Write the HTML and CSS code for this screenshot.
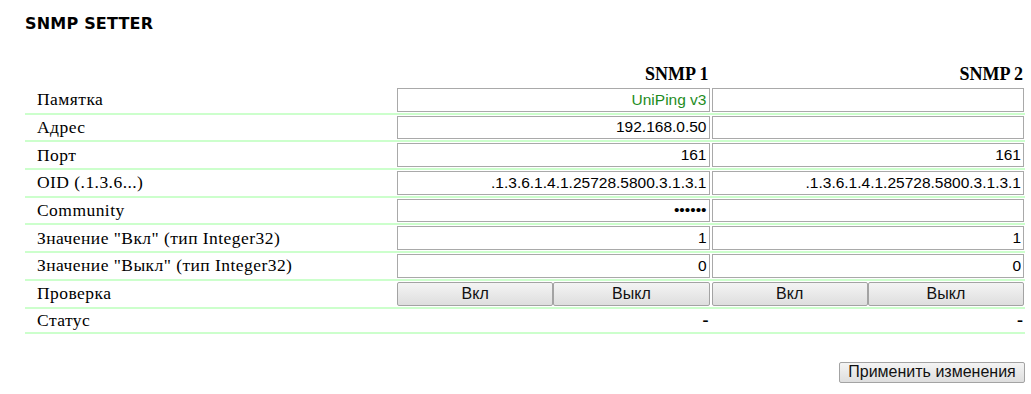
FILE: index.html
```html
<!DOCTYPE html>
<html lang="ru">
<head>
<meta charset="utf-8">
<title>SNMP SETTER</title>
<link rel="stylesheet" href="styles.css">
</head>
<body>
<div class="page">
  <h1 class="title">SNMP SETTER</h1>
  <div class="grid">
    <div class="hd"></div>
    <div class="hd">SNMP 1</div>
    <div class="hd">SNMP 2</div>

    <div class="lbl">Памятка</div>
    <div class="cell"><input class="fld green" type="text" value="UniPing v3"></div>
    <div class="cell"><input class="fld" type="text" value=""></div>

    <div class="lbl">Адрес</div>
    <div class="cell"><input class="fld" type="text" value="192.168.0.50"></div>
    <div class="cell"><input class="fld" type="text" value=""></div>

    <div class="lbl">Порт</div>
    <div class="cell"><input class="fld" type="text" value="161"></div>
    <div class="cell"><input class="fld" type="text" value="161"></div>

    <div class="lbl">OID (.1.3.6...)</div>
    <div class="cell"><input class="fld" type="text" value=".1.3.6.1.4.1.25728.5800.3.1.3.1"></div>
    <div class="cell"><input class="fld" type="text" value=".1.3.6.1.4.1.25728.5800.3.1.3.1"></div>

    <div class="lbl">Community</div>
    <div class="cell"><input class="fld" type="password" value="public"></div>
    <div class="cell"><input class="fld" type="password" value=""></div>

    <div class="lbl">Значение "Вкл" (тип Integer32)</div>
    <div class="cell"><input class="fld" type="text" value="1"></div>
    <div class="cell"><input class="fld" type="text" value="1"></div>

    <div class="lbl">Значение "Выкл" (тип Integer32)</div>
    <div class="cell"><input class="fld" type="text" value="0"></div>
    <div class="cell"><input class="fld" type="text" value="0"></div>

    <div class="lbl">Проверка</div>
    <div class="cell btns"><button class="btn" type="button">Вкл</button><button class="btn" type="button">Выкл</button></div>
    <div class="cell btns"><button class="btn" type="button">Вкл</button><button class="btn" type="button">Выкл</button></div>

    <div class="lbl">Статус</div>
    <div class="cell status">-</div>
    <div class="cell status">-</div>
  </div>
  <div class="actions">
    <button class="btn apply" type="button">Применить изменения</button>
  </div>
</div>
</body>
</html>
```

FILE: styles.css
```css
html, body {
  margin: 0;
  padding: 0;
  background: #ffffff;
}

.page {
  padding: 14px 6px 0 25px;
  font-family: "Liberation Serif", "Times New Roman", serif;
  font-size: 18px;
  color: #000;
}

.title {
  margin: 0;
  font-family: "DejaVu Sans", Verdana, sans-serif;
  font-weight: bold;
  font-size: 16px;
  line-height: 19px;
  letter-spacing: 0.2px;
}

.grid {
  margin-top: 32px;
  display: grid;
  grid-template-columns: 371px 1fr 1fr;
}

.hd {
  font-family: "Liberation Serif", "Times New Roman", serif;
  font-weight: bold;
  font-size: 18px;
  text-align: right;
  line-height: 18px;
  padding: 0 2px 4px 0;
}

.lbl,
.cell {
  border-bottom: 2px solid #ccffcc;
  padding: 1px;
}

.lbl {
  font-family: "Liberation Serif", "Times New Roman", serif;
  font-size: 17.5px;
  letter-spacing: 0.45px;
  padding-left: 12px;
  display: flex;
  align-items: center;
}

.fld {
  display: block;
  box-sizing: border-box;
  width: 100%;
  height: 23.67px;
  margin: 0;
  padding: 0 2px;
  border: 1px solid #a9a9a9;
  background: #fff;
  font-family: "Liberation Sans", Arial, sans-serif;
  font-size: 15.5px;
  color: #000;
  text-align: right;
  outline: none;
}

.fld.green {
  color: #1e8c1e;
}

.btns {
  display: flex;
}

.btn {
  box-sizing: border-box;
  margin: 0;
  padding: 0 8px;
  border: 1px solid #a3a3a3;
  border-radius: 2px;
  background: linear-gradient(#f4f4f4, #dedede);
  font-family: "Liberation Sans", Arial, sans-serif;
  font-size: 16px;
  color: #111;
}

.btns .btn {
  flex: 1 1 0;
  height: 24px;
}

.status {
  text-align: right;
  font-family: "Liberation Serif", "Times New Roman", serif;
  font-weight: bold;
  font-size: 18px;
  padding-right: 2px;
  line-height: 20px;
}

.actions {
  display: flex;
  justify-content: flex-end;
  margin-top: 28px;
}

.apply {
  width: 186px;
  height: 21px;
  padding: 0;
}
```
